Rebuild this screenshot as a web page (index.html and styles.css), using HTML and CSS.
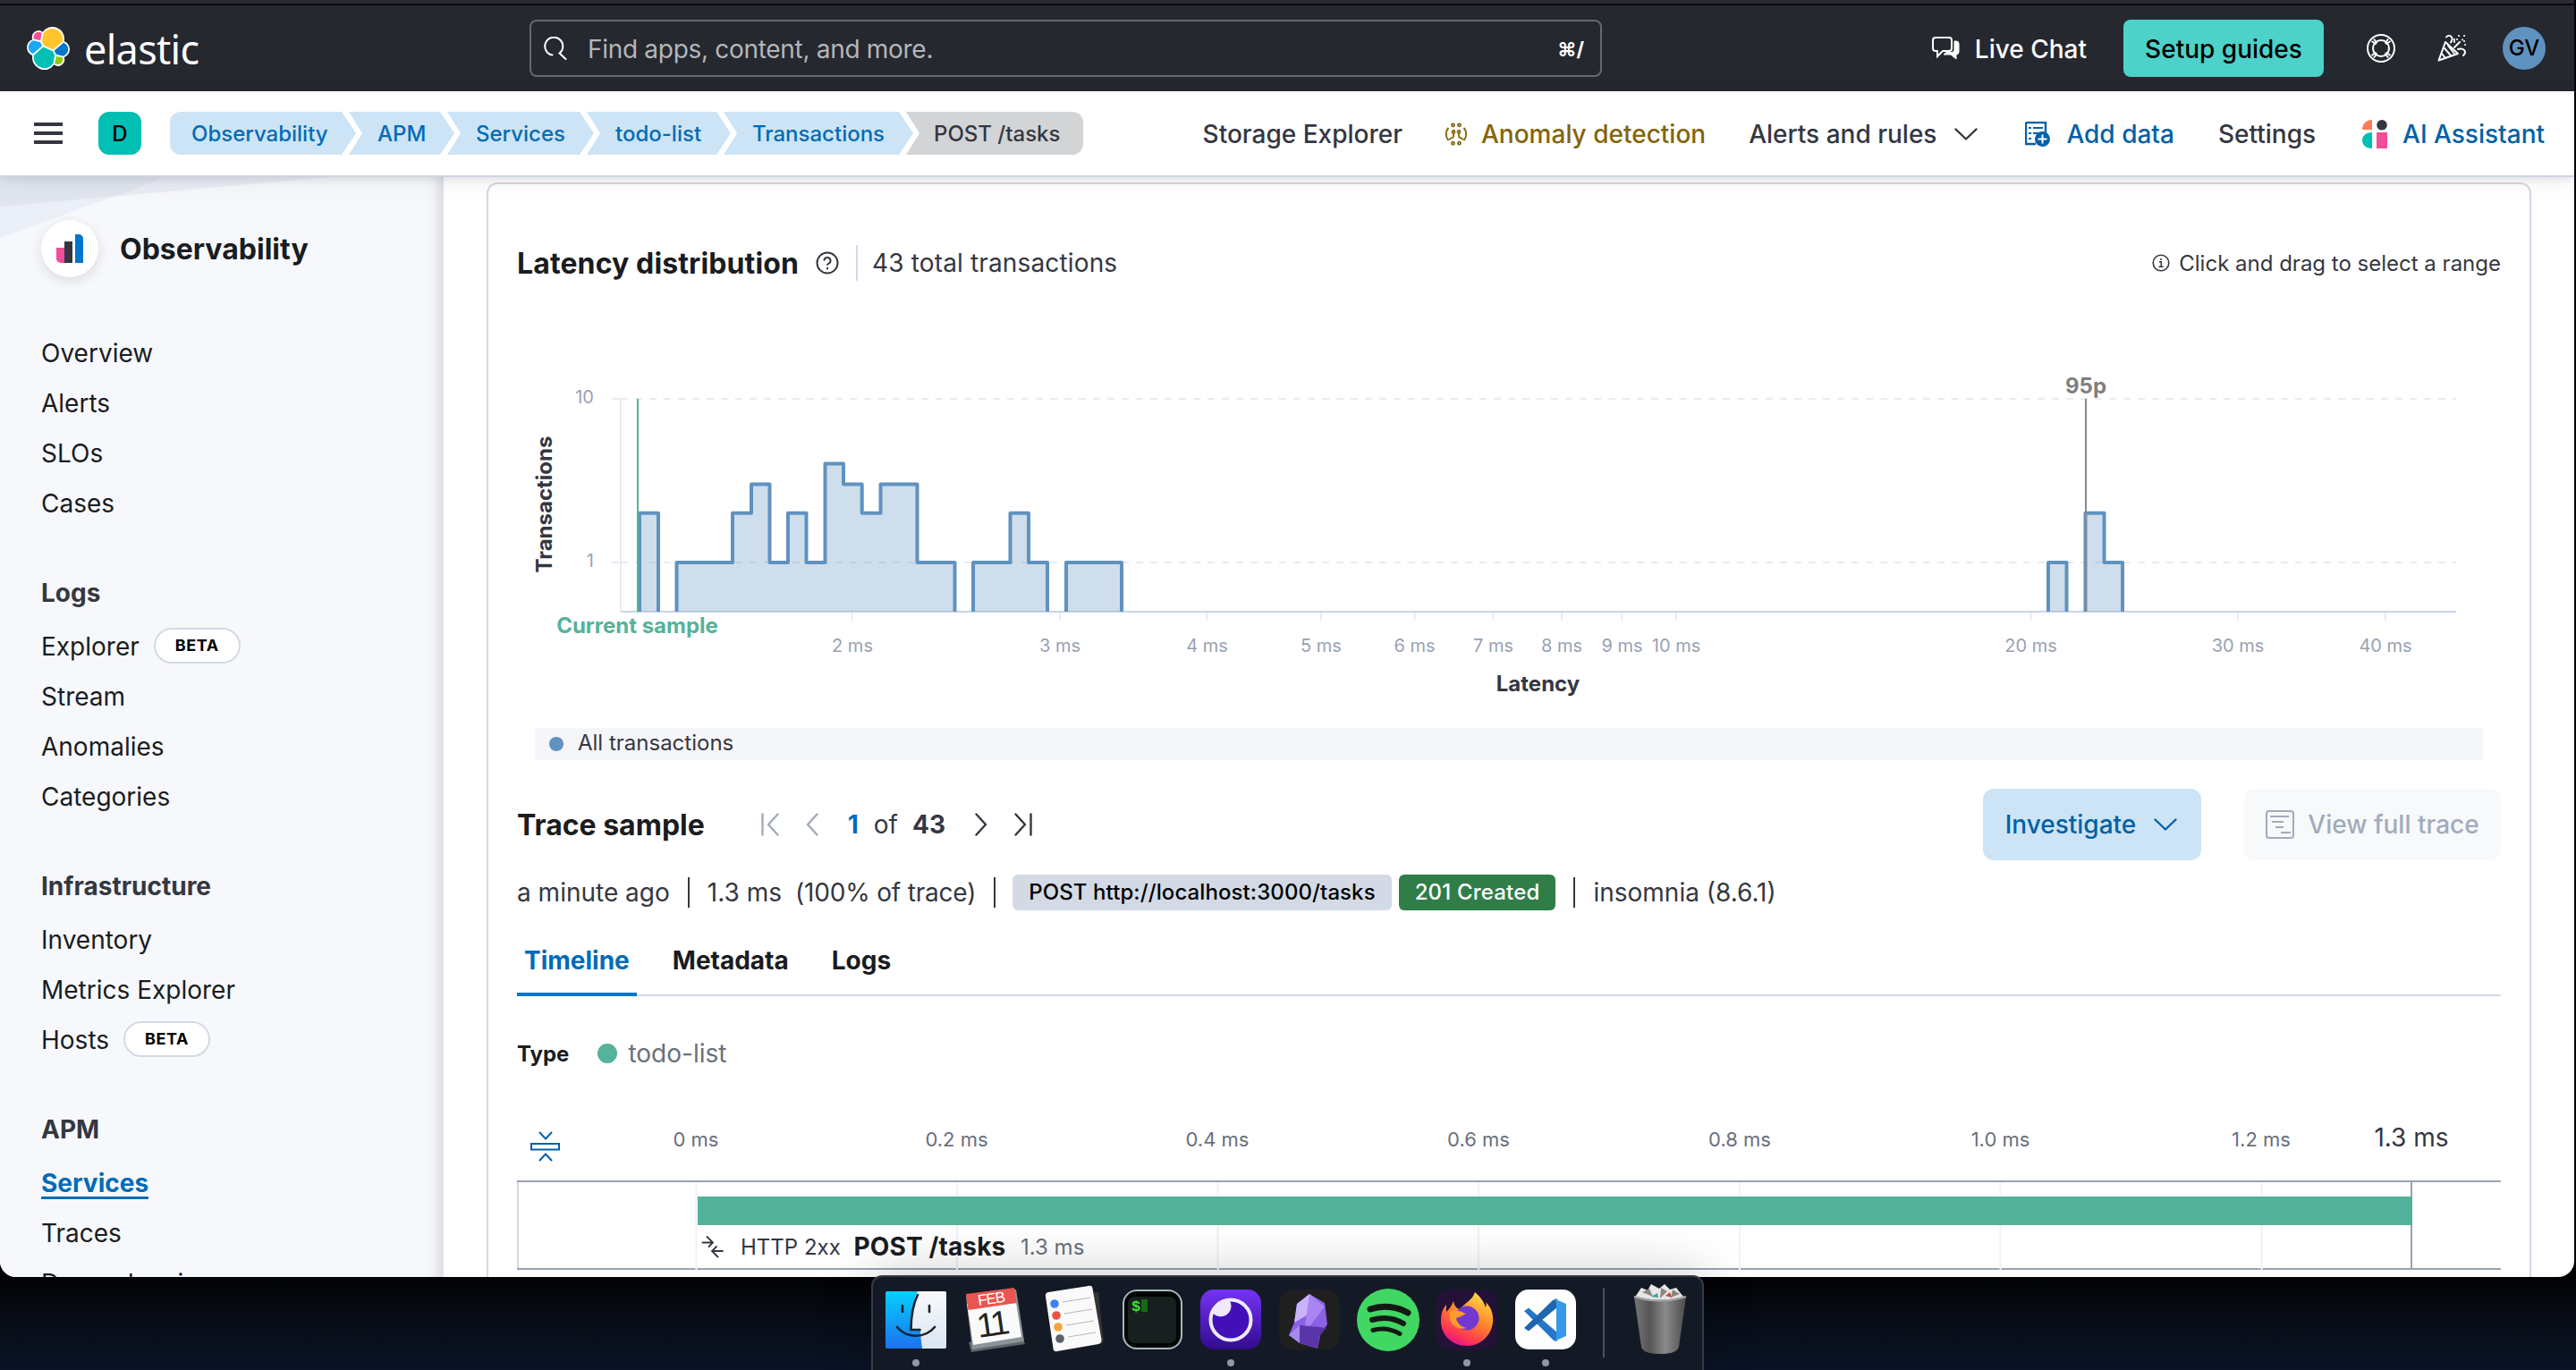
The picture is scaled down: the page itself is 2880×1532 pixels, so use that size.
FILE: index.html
```html
<!DOCTYPE html>
<html lang="en">
<head>
<meta charset="utf-8">
<title>POST /tasks - Transactions - APM - Elastic</title>
<link rel="stylesheet" href="styles.css">
</head>
<body>
<div class="window">
  <header class="topbar">
    <div class="brand">
      <svg class="brand-mark" viewBox="0 0 32 32"><path fill="#fff" d="M32 16.77a6.334 6.334 0 00-1.14-3.63 6.269 6.269 0 00-3.02-2.297 9.108 9.108 0 00-.873-5.965A9.05 9.05 0 0022.56.746a8.991 8.991 0 00-10.806 3.03 4.803 4.803 0 00-5.85-.065 4.857 4.857 0 00-1.704 5.63 6.357 6.357 0 00-3.035 2.32A6.406 6.406 0 000 15.31a6.344 6.344 0 001.145 3.646 6.279 6.279 0 003.039 2.301 9.137 9.137 0 00.87 5.968 9.081 9.081 0 004.422 4.134 9.02 9.02 0 006.016.428A9.053 9.053 0 0020.24 28.23a4.798 4.798 0 005.847.072 4.853 4.853 0 001.709-5.627 6.357 6.357 0 003.037-2.32A6.406 6.406 0 0032 16.77z"/><path fill="#fec52e" d="M12.58 13.787l7.002 3.211 7.066-6.213a7.849 7.849 0 00.152-1.557c0-1.692-.539-3.34-1.54-4.701a7.909 7.909 0 00-4.02-2.869 7.87 7.87 0 00-4.932.086 7.92 7.92 0 00-3.92 3.007l-1.178 6.104 1.37 2.932z"/><path fill="#00bfb3" d="M5.333 21.228A8.01 8.01 0 006.71 27.51a7.964 7.964 0 004.038 2.884 7.93 7.93 0 004.959-.082 7.97 7.97 0 003.943-3.014l1.166-6.106-1.556-2.985-7.03-3.211-6.897 6.232z"/><path fill="#f04e98" d="M5.288 9.067l4.8 1.137L11.14 4.73a3.785 3.785 0 00-4.538-.023A3.82 3.82 0 005.288 9.067z"/><path fill="#1ba9f5" d="M4.872 10.214a5.294 5.294 0 00-2.595 1.882 5.324 5.324 0 00-.142 6.124 5.287 5.287 0 002.505 2.002l6.733-6.101-1.235-2.65-5.266-1.257z"/><path fill="#93c90e" d="M20.873 27.298a3.742 3.742 0 002.285.785 3.783 3.783 0 003.101-1.63 3.813 3.813 0 00.451-3.484l-4.8-1.125-1.037 5.454z"/><path fill="#0077cc" d="M21.848 20.563l5.28 1.238a5.34 5.34 0 002.622-1.938 5.37 5.37 0 001.013-3.106 5.312 5.312 0 00-.936-3.01 5.283 5.283 0 00-2.475-1.944l-6.904 6.07 1.4 2.69z"/></svg>
      <span class="brand-name">elastic</span>
    </div>
    <div class="search">
      <svg class="search-icon" viewBox="0 0 26 26" fill="none" stroke="#fff" stroke-width="2" stroke-linecap="round"><path d="M9.5 20.6A10 10 0 1 1 17.5 18.6L24.5 25"/></svg>
      <span class="search-text">Find apps, content, and more.</span>
      <span class="search-key">⌘/</span>
    </div>
    <div class="top-actions">
      <span class="live-chat">
        <svg class="chat-icon" viewBox="0 0 32 28" fill="none" stroke="#fff" stroke-width="2"><path d="M4 2h15a3 3 0 0 1 3 3v9a3 3 0 0 1-3 3h-7l-6 6v-6H4a3 3 0 0 1-3-3V5a3 3 0 0 1 3-3z"/><path d="M25 6h2a3 3 0 0 1 3 3v9a3 3 0 0 1-3 3v5l-6-5h-8l3-2.500h6a3 3 0 0 0 3-3z" fill="#fff" stroke-width="1"/></svg>
        <span class="nudge">Live Chat</span></span>
      <span class="setup">Setup guides</span>
      <svg class="ring" viewBox="0 0 32 32" fill="none" stroke="#fff" stroke-width="2"><circle cx="16" cy="16" r="15"/><circle cx="16" cy="16" r="9"/><path d="M5.500 8l5 3.500M8 5.500l3.500 5M26.500 8l-5 3.500M24 5.500l-3.500 5M5.500 24l5-3.500M8 26.500l3.500-5M26.500 24l-5-3.500M24 26.500l-3.500-5"/></svg>
      <svg class="party" viewBox="0 0 34 32" fill="none" stroke="#fff" stroke-width="2" stroke-linecap="round" stroke-linejoin="round"><path d="M9 9L1.500 29.500 23 22z"/><path d="M8 16l7 8M5 22l4 5M12 13l7 9M10 3.500a3.500 3.500 0 0 1 6 4l-1 2M19 15l6-6M23 17c3-1 5-1 7 1s1 4-1 6M19 9V6"/><path d="M24 2h.1M22 6h.1M30 2h.1M28 6.500h.1M31 12h.1M30 8h.1"/></svg>
      <span class="user">GV</span>
    </div>
  </header>

  <nav class="subbar">
    <div class="burger"><i></i><i></i><i></i></div>
    <span class="space">D</span>
    <div class="crumbs">
      <span class="crumb crumb-first">Observability</span>
      <span class="crumb crumb-apm">APM</span>
      <span class="crumb crumb-services">Services</span>
      <span class="crumb crumb-list">todo-list</span>
      <span class="crumb crumb-tx">Transactions</span>
      <span class="crumb crumb-last">POST /tasks</span>
    </div>
    <div class="menu">
      <span class="menu-storage">Storage Explorer</span>
      <span class="menu-anomaly"><svg class="ml" viewBox="0 0 26 26" fill="none" stroke="#83650a" stroke-width="1.800"><path d="M4.500 6C1 9.500 1 16.500 4.500 20M21.500 6c3.500 3.500 3.500 10.500 0 14M10 12.500v3.500l-5 3M16 12.500v3.500l5 3"/><circle cx="9.500" cy="2.800" r="1.500"/><circle cx="16.500" cy="2.800" r="1.500"/><circle cx="9.500" cy="23.200" r="1.500"/><circle cx="16.500" cy="23.200" r="1.500"/><circle cx="10" cy="10.500" r="1.500"/><circle cx="16" cy="10.500" r="1.500"/></svg>Anomaly detection</span>
      <span class="menu-alerts">Alerts and rules<svg class="chev" viewBox="0 0 26 14" fill="none" stroke="#343741" stroke-width="2.400" stroke-linecap="round" stroke-linejoin="round"><path d="M1.500 1.500L13 12.500 24.500 1.500"/></svg></span>
      <span class="menu-add"><svg class="add" viewBox="0 0 28 28"><path d="M1 1h22v11M12 25H1V1" fill="none" stroke="#0061a6" stroke-width="2.400"/><path d="M4 7h3M9 7h11M4 13h3M9 13h7M4 19h3" stroke="#0061a6" stroke-width="2"/><circle cx="19.500" cy="19.500" r="8.500" fill="#0061a6"/><path d="M19.500 14.500v10M14.500 19.500h10" stroke="#fff" stroke-width="2"/></svg>Add data</span>
      <span class="menu-settings">Settings</span>
      <span class="menu-ai"><svg class="ai" viewBox="0 0 30 32"><path fill="#ff7a59" d="M12 0v11H1C1 5 5 0 12 0z"/><circle cx="23" cy="5.800" r="5.800" fill="#343741"/><path fill="#00bfb3" d="M12 14v18C5 32 1 28 1 23s4-9 11-9z"/><path fill="#f04e98" d="M17 14h12v18H17z"/></svg>AI Assistant</span>
    </div>
  </nav>

  <div class="body">
    <aside class="sidebar">
      <svg class="sidebar-deco" viewBox="0 0 496 80" preserveAspectRatio="none"><path d="M0 0h370L0 33z" fill="#e9ecf4"/><path d="M0 0h186L0 68z" fill="#e9edf7" fill-opacity=".9"/><path d="M0 0h186L133 21 0 33z" fill="#e1e5ee"/></svg>
      <div class="solution">
        <span class="solution-logo"><svg viewBox="0 0 30 32"><path fill="#f04e98" d="M0 15h9v17H5a5 5 0 0 1-5-5z"/><path fill="#343741" d="M9 8h9v24H9z"/><path fill="#0077cc" d="M21 0h4a5 5 0 0 1 5 5v27h-9z"/></svg></span>
        <h2>Observability</h2>
      </div>
      <ul class="group"><li>Overview</li><li>Alerts</li><li>SLOs</li><li>Cases</li></ul>
      <h3>Logs</h3>
      <ul class="group"><li>Explorer<span class="beta">BETA</span></li><li>Stream</li><li>Anomalies</li><li>Categories</li></ul>
      <h3>Infrastructure</h3>
      <ul class="group"><li>Inventory</li><li>Metrics Explorer</li><li>Hosts<span class="beta">BETA</span></li></ul>
      <h3>APM</h3>
      <ul class="group"><li class="active"><span>Services</span></li><li>Traces</li><li>Dependencies</li></ul>
    </aside>

    <main class="main">
      <section class="panel">
        <div class="latency-head">
          <h1 class="latency-title">Latency distribution</h1>
          <svg class="help" viewBox="0 0 26 26" fill="none" stroke="#343741" stroke-width="2"><circle cx="13" cy="13" r="11.500"/><path d="M9.500 10.500a3.500 3.500 0 1 1 5 3.100c-1 .5-1.500 1-1.500 2.200"/><path d="M13 18v2.200"/></svg>
          <span class="total">43 total transactions</span>
          <span class="hint"><svg class="info" viewBox="0 0 20 20" fill="none" stroke="#343741" stroke-width="1.600"><circle cx="10" cy="10" r="8.800"/><path d="M8 8.800h2.300V14M7.500 14.200h5.200M10 5v2"/></svg>Click and drag to select a range</span>
        </div>

        <svg class="chart" viewBox="578 314 2218 500">
          <g class="grid"><path d="M694 446H2746M694 629H2746" stroke-dasharray="8 8"/><path d="M684 446h12M684 629h12M694 446V684"/><path d="M952.800 684v10M1185 684v10M1349.500 684v10M1477 684v10M1581.500 684v10M1669.500 684v10M1746 684v10M1813.500 684v10M1874 684v10M2270.500 684v10M2502 684v10M2667 684v10"/><path d="M694 684H2746" class="baseline"/></g>
          <path class="area" d="M715 684V573.700H736V684zM756.500 684V629H819V573.700H840V541.600H860.500V629H881V573.700H901.500V629H922.500V518.600H943V541.600H963.700V573.700H984.500V541.600H1025.500V629H1067.500V684zM1088 684V629H1129.500V573.700H1150V629H1171V684zM1192 684V629H1254V684zM2290 684V629H2310.500V684zM2331.500 684V573.700H2352.500V629H2373V684z"/>
          <path class="outline" d="M715 684V573.700H736V684M756.500 684V629H819V573.700H840V541.600H860.500V629H881V573.700H901.500V629H922.500V518.600H943V541.600H963.700V573.700H984.500V541.600H1025.500V629H1067.500V684M1088 684V629H1129.500V573.700H1150V629H1171V684M1192 684V629H1254V684M2290 684V629H2310.500V684M2331.500 684V573.700H2352.500V629H2373V684"/>
          <path d="M713 446V684" stroke="#54b399" stroke-width="2"/>
          <path d="M2332 446V684" stroke="#888" stroke-width="2"/>
          <g class="tick"><text x="664" y="451" text-anchor="end">10</text><text x="664" y="634" text-anchor="end">1</text>
          <g text-anchor="middle"><text x="953" y="729">2 ms</text><text x="1185" y="729">3 ms</text><text x="1349.500" y="729">4 ms</text><text x="1477" y="729">5 ms</text><text x="1581.500" y="729">6 ms</text><text x="1669.500" y="729">7 ms</text><text x="1746" y="729">8 ms</text><text x="1813.500" y="729">9 ms</text><text x="1874" y="729">10 ms</text><text x="2270.500" y="729">20 ms</text><text x="2502" y="729">30 ms</text><text x="2667" y="729">40 ms</text></g></g>
          <text class="axis-title" x="1719.500" y="773">Latency</text>
          <text class="axis-title" transform="translate(617 564) rotate(-90)">Transactions</text>
          <text class="mark-sample" x="712.500" y="708">Current sample</text>
          <text class="mark-95" x="2332" y="440">95p</text>
        </svg>
        <div class="legend"><i></i><span>All transactions</span></div>

        <div class="trace-head">
          <h1>Trace sample</h1>
          <div class="pager">
            <svg class="pg-first" viewBox="0 0 20 26"><path d="M1.500 1.500v23M18.500 1.500L8 13l10.500 11.500"/></svg>
            <svg class="pg-prev" viewBox="0 0 14 26"><path d="M12.500 1.500L2 13l10.500 11.500"/></svg>
            <b class="pg-current">1</b><span class="pg-of">of</span><b class="pg-total">43</b>
            <svg class="pg-next" viewBox="0 0 14 26"><path d="M1.500 1.500L12 13 1.500 24.500"/></svg>
            <svg class="pg-last" viewBox="0 0 20 26"><path d="M1.500 1.500L12 13 1.500 24.500M18.500 1.500v23"/></svg>
          </div>
          <span class="investigate">Investigate<svg class="chev" viewBox="0 0 26 14" fill="none" stroke="#0061a6" stroke-width="2.400" stroke-linecap="round" stroke-linejoin="round"><path d="M1.500 1.500L13 12.500 24.500 1.500"/></svg></span>
          <span class="full-trace"><svg class="trace-icon" viewBox="0 0 32 32" fill="none" stroke="#a2abba" stroke-width="2"><rect x="1" y="1" width="30" height="30" rx="3"/><path d="M5 7h21M7 13h13M11 19h9M17 25h11"/></svg>View full trace</span>
        </div>

        <div class="facts">
          <span>a minute ago</span><i class="bar"></i><span>1.3 ms</span><span class="pct">(100% of trace)</span><i class="bar bar-tight"></i>
          <span class="badge">POST http://localhost:3000/tasks</span><span class="badge badge-ok">201 Created</span><i class="bar"></i><span>insomnia (8.6.1)</span>
        </div>

        <div class="tabs"><span class="tab tab-on">Timeline</span><span class="tab">Metadata</span><span class="tab">Logs</span></div>
        <div class="type"><b>Type</b><i></i><span>todo-list</span></div>

        <svg class="waterfall" viewBox="578 1198 2218 230">
          <g fill="none" stroke="#0061a6" stroke-width="2" stroke-linecap="round"><path d="M603.500 1266.500l6.500 7 6.500-7M603.500 1297.500l6.500-7 6.500 7"/><path d="M594 1279h31v6.500h-31z" stroke-linecap="butt"/></g>
          <g class="wf-tick"><text x="778" y="1282">0 ms</text><text x="1069.500" y="1282">0.2 ms</text><text x="1361" y="1282">0.4 ms</text><text x="1653" y="1282">0.6 ms</text><text x="1945" y="1282">0.8 ms</text><text x="2236.500" y="1282">1.0 ms</text><text x="2528" y="1282">1.2 ms</text></g>
          <text class="wf-end" x="2696" y="1282">1.3 ms</text>
          <path d="M578 1321H2796M578 1419H2796" stroke="#98a2b3" stroke-width="2"/>
          <path d="M579 1322V1418" stroke="#d3dae6" stroke-width="2"/>
          <path d="M778.500 1322V1420M1070 1322V1420M1361.500 1322V1420M1653 1322V1420M1945 1322V1420M2236.500 1322V1420M2528.500 1322V1420" stroke="#f0f2f7" stroke-width="2"/>
          <path d="M2696 1322V1418" stroke="#98a2b3" stroke-width="2"/>
          <path d="M780 1338H2697V1370H780z" fill="#52b39a"/>
          <g fill="none" stroke="#343741" stroke-width="1.800" stroke-linecap="round"><path d="M785.500 1389.500h11M790.500 1383l6.500 6.500-4.500 4.500M808 1399h-11M802.500 1405.500l-6.500-6.500 5-5"/></g>
          <text class="wf-http" x="828" y="1403">HTTP 2xx</text>
          <text class="wf-name" x="954.500" y="1404">POST /tasks</text>
          <text class="wf-dur" x="1141" y="1403">1.3 ms</text>
        </svg>
      </section>
    </main>
  </div>
</div>

<div class="dock">
  <svg class="app" viewBox="0 0 88 104">
    <defs><linearGradient id="fb" x2="0" y2="1"><stop stop-color="#06d0fb"/><stop offset="1" stop-color="#1b72f0"/></linearGradient><linearGradient id="fw" x2="0" y2="1"><stop stop-color="#f8f8fb"/><stop offset="1" stop-color="#dbe6f3"/></linearGradient></defs>
    <rect x="10" y="16" width="68" height="64" rx="2" fill="url(#fb)"/><path d="M46 16h30a2 2 0 0 1 2 2v60a2 2 0 0 1-2 2H51c-1-8-2-15-2-21H38c0-16 2-30 8-43z" fill="url(#fw)"/>
    <path d="M29 32v7M59 32v7M23 56c11 13 31 13 42 0M46 20c-6 12-7.500 24-7.500 39h10" fill="none" stroke="#1a2430" stroke-width="2.600" stroke-linecap="round"/><circle cx="44" cy="96" r="4" fill="#9097a6"/></svg>
  <svg class="app" viewBox="0 0 88 104"><path d="M15 73l57-12 6 14-60 9z" fill="#5e6669"/><path d="M12 22l56-8 9 58-58 9z" fill="#8b9599"/><path d="M13 30l54-8 7 45-54 9z" fill="#fafafa"/><path d="M12 19l54-7 2.500 17-54 8z" fill="#ea5550"/>
    <text class="cal-month" transform="translate(26 32) rotate(-8)">FEB</text><text class="cal-day" transform="translate(26 68) rotate(-8)">11</text></svg>
  <svg class="app" viewBox="0 0 88 104"><path d="M17 27l5 53q1 4 5 3l47-8q4-1 3.500-5L72 17z" fill="#343434"/><path d="M13 22q-1-4 3-5l45-7q4-1 4.500 3l10 57q.5 4-3.500 5l-46 8q-4 1-4.500-3z" fill="#fafafa"/>
    <g stroke="#b9b9b9" stroke-width="1.200"><path d="M32 28l31-5M34 41l31-5M36 54l31-5M38 67l31-5"/></g><circle cx="23" cy="30" r="4.800" fill="#3d84f7"/><circle cx="25" cy="43" r="4.800" fill="#ec5148"/><circle cx="27" cy="56" r="4.800" fill="#f3a33c"/><circle cx="29" cy="69" r="4.800" fill="#5d6168"/></svg>
  <svg class="app" viewBox="0 0 88 104"><rect x="11" y="14" width="67" height="67" rx="16" fill="#a9b8bd"/><rect x="13" y="16" width="63" height="63" rx="14" fill="#020303"/><rect x="17" y="22" width="54" height="52" rx="7" fill="#17201f"/><text class="term" x="21" y="38">$</text><rect x="32" y="25" width="7" height="14" fill="#186a17"/></svg>
  <svg class="app" viewBox="0 0 88 104"><defs><linearGradient id="in" x2="0" y2="1"><stop stop-color="#7533f5"/><stop offset="1" stop-color="#320b8e"/></linearGradient></defs><rect x="10" y="14" width="68" height="67" rx="15" fill="url(#in)"/><circle cx="44" cy="48" r="22.500" fill="#4310b8" stroke="#eeeafb" stroke-width="4"/><path d="M42.500 26A23 23 0 0 0 23 39a10 10 0 1 0 19.500-13z" fill="#eeeafb"/><circle cx="44" cy="96" r="4" fill="#9097a6"/></svg>
  <svg class="app" viewBox="0 0 88 104"><rect x="10" y="14" width="68" height="67" rx="15" fill="#1f1f1f"/><path d="M44 19l-14 11-3 21-6 14 12 9 20 6 3-15 8-12-3-24z" fill="#8c61e6"/><path d="M44 19l-14 11-3 21 17-10z" fill="#c9b3fb"/><path d="M44 19l-5 36 6-1 16-21z" fill="#a885f2"/><path d="M33 54l22 2 8 1-8 9-2 14-20-6z" fill="#5a35a8"/><path d="M33 54l-12 11 12 9z" fill="#a788ee"/></svg>
  <svg class="app" viewBox="0 0 88 104"><circle cx="44" cy="48" r="35" fill="#41d763"/><g fill="none" stroke="#121a14" stroke-linecap="round"><path d="M24 36c14-5 30-3 42 4" stroke-width="7"/><path d="M26 48c12-3.500 25-2 35 4" stroke-width="6"/><path d="M27 59.500c11-3 21-1 30 4" stroke-width="5"/></g></svg>
  <svg class="app" viewBox="0 0 88 104"><defs><linearGradient id="ff" x1=".8" x2=".3" y2="1"><stop stop-color="#ffe04a"/><stop offset=".45" stop-color="#ff8a2a"/><stop offset=".8" stop-color="#ff3a4e"/><stop offset="1" stop-color="#e4108c"/></linearGradient></defs><rect x="10" y="14" width="68" height="67" rx="15" fill="#241137"/><path d="M53 17c7 6 10 11 12 17 1-3 1-4 0-6 6 6 9 13 8 23-2 15-14 26-29 26-17 0-29-12-29-28 0-8 2-14 6-18v8c4-4 6-7 8-12 1 5 3 8 7 9 7-8 14-10 17-19z" fill="url(#ff)"/><circle cx="44" cy="46" r="13.500" fill="#7139d0"/><path d="M25 39c7-4 12 0 18 2-4 2-7 4-11 5 1 6 6 10 12 11-12 3-21-5-19-18z" fill="#ff9a2c"/><circle cx="44" cy="96" r="4" fill="#9097a6"/></svg>
  <svg class="app" viewBox="0 0 88 104"><rect x="10" y="14" width="68" height="67" rx="15" fill="#fff"/><path d="M20 38l5-3.500L57 62v10l-4-1z" fill="#2577c6"/><path d="M20 57l5 3.500L57 34V24l-5 2z" fill="#1f66ad"/><path d="M53 24l14 6v36l-14 6q3-2 3-5V29q0-3-3-5z" fill="#3698ea"/><circle cx="44" cy="96" r="4" fill="#9097a6"/></svg>
  <i class="dock-rule"></i>
  <svg class="app" viewBox="0 0 88 104"><defs><linearGradient id="tr"><stop stop-color="#777"/><stop offset=".3" stop-color="#555"/><stop offset=".6" stop-color="#8a8a8a"/><stop offset="1" stop-color="#4b4b4b"/></linearGradient></defs><path d="M15 22q29-12 58 0l-8 56q-2 8-21 8t-21-8z" fill="url(#tr)"/><path d="M17 21l6-9 7 3 4-7 9 5 6-5 6 6 7-2 8 10q-26 7-53 0z" fill="#e6e6e6"/><path d="M24 17l8-4 4 9zM45 12l7 4-8 8zM58 14l8 5-10 4z" fill="#8f8580"/><path d="M34 22l7-4 1 5z" fill="#37a2a0"/><path d="M50 21l5-4 2 6z" fill="#c24b3b"/><path d="M15 22q29 9 58 0" fill="none" stroke="#a5a5a5" stroke-width="2"/></svg>
</div>
</body>
</html>
```
FILE: styles.css
```css
* { box-sizing: border-box; }
body {
  margin: 0; width: 2880px; height: 1532px; overflow: hidden; position: relative;
  background: linear-gradient(#020305 0, #020305 1430px, #070b14 1470px, #0a1426 1532px);
  font-family: Inter, "Liberation Sans", sans-serif; font-size: 28px; color: #343741;
}
h1, h2, h3, ul { margin: 0; padding: 0; list-style: none; }
svg { display: block; flex: none; }
span, b, li { white-space: nowrap; }
.window {
  width: 2878px; height: 1428px; overflow: hidden; background: #fff;
  border-top: 4px solid #2b2a33; border-radius: 0 0 18px 18px;
  display: flex; flex-direction: column;
}

/* Global header */
.topbar { height: 98px; flex: none; border-top: 2px solid #08080a; background: #25282f; display: flex; align-items: center; padding: 0 32px 0 30px; color: #fff; }
.brand { width: 562px; display: flex; align-items: center; }
.brand-mark { width: 48px; height: 48px; }
.brand-name { font: 400 45px/60px "Noto Sans", sans-serif; letter-spacing: -.7px; margin-left: 16px; padding-top: 1px; }
.search { width: 1199px; height: 64px; border: 2px solid #65686e; border-radius: 8px; display: flex; align-items: center; padding: 0 18px 0 14px; }
.search-icon { width: 26px; height: 26px; }
.search-text { margin-left: 23px; padding-top: 2px; letter-spacing: -.3px; color: #b4b6ba; flex: 1; }
.search-key { font-size: 22px; font-weight: 700; padding-top: 2px; }
.top-actions { flex: 1; display: flex; align-items: center; justify-content: flex-end; font-weight: 500; }
.live-chat { display: flex; align-items: center; }
.nudge { padding-top: 2px; }
.chat-icon { width: 32px; height: 28px; margin-right: 16px; }
.setup { margin-left: 41px; width: 224px; height: 64px; padding-top: 1px; border-radius: 8px; background: #4dd2ca; color: #000; line-height: 64px; text-align: center; }
.ring { width: 32px; height: 32px; margin-left: 48px; }
.party { width: 34px; height: 32px; margin-left: 47px; }
.user { width: 48px; height: 48px; margin-left: 39px; border-radius: 50%; background: #6092c0; color: #000; font-size: 24px; line-height: 48px; text-align: center; }

/* Breadcrumb bar */
.subbar { height: 96px; flex: none; border-bottom: 2px solid #cdd4e2; display: flex; align-items: center; padding: 0 33px 0 38px; position: relative; z-index: 2; background: #fff; box-shadow: 0 2px 10px rgba(0,0,0,.1), 0 6px 30px rgba(0,0,0,.05); }
.burger { width: 32px; display: flex; flex-direction: column; gap: 6px; }
.burger i { height: 4px; background: #343741; }
.space { width: 48px; height: 48px; margin-left: 40px; border-radius: 12px; background: #00bfb3; color: #000; font-size: 24px; font-weight: 500; line-height: 49px; text-align: center; }
.crumbs { margin-left: 32px; display: flex; font-size: 24px; font-weight: 500; }
.crumb { height: 48px; line-height: 50px; padding-left: 32px; margin-left: -8px; background: #cce4f5; color: #006bb8; clip-path: polygon(0 0, calc(100% - 16px) 0, 100% 50%, calc(100% - 16px) 100%, 0 100%, 15px 50%); }
.crumb-first { width: 208px; padding-left: 24px; margin-left: 0; border-radius: 12px 0 0 12px; clip-path: polygon(0 0, calc(100% - 16px) 0, 100% 50%, calc(100% - 16px) 100%, 0 100%); }
.crumb-apm { width: 118px; }
.crumb-services { width: 164px; }
.crumb-list { width: 161px; }
.crumb-tx { width: 212px; }
.crumb-last { width: 198px; padding-left: 31px; border-radius: 0 12px 12px 0; background: #d3d4d6; color: #343741; clip-path: polygon(0 0, 100% 0, 100% 100%, 0 100%, 15px 50%); }
.menu { margin-left: auto; display: flex; align-items: center; padding-top: 2px; font-weight: 500; }
.menu span { display: flex; align-items: center; }
.menu-anomaly { margin-left: 47px; color: #83650a; }
.ml { width: 26px; height: 26px; margin-right: 15px; }
.menu-alerts { margin-left: 48px; }
.chev { width: 26px; height: 14px; margin-left: 20px; }
.menu-add { margin-left: 53px; color: #0061a6; }
.add { width: 28px; height: 28px; margin-right: 18px; }
.menu-settings { margin-left: 49px; }
.menu-ai { margin-left: 51px; color: #0061a6; }
.ai { width: 30px; height: 32px; margin-right: 16px; }

/* Sidebar */
.body { flex: 1; min-height: 0; display: flex; }
.sidebar { width: 496px; flex: none; position: relative; padding: 48px 0 0 46px; background: #f7f8fc; border-right: 2px solid #dfe2ec; box-shadow: inset -14px 0 14px -10px rgba(60,65,80,.16); color: #1a1c21; }
.sidebar-deco { position: absolute; left: 0; top: 0; width: 494px; height: 80px; }
.solution { position: relative; display: flex; align-items: center; height: 64px; margin-bottom: 57px; }
.solution h2 { margin-left: 24px; font-size: 32px; font-weight: 700; }
.solution-logo { width: 64px; height: 64px; border-radius: 50%; background: #fff; box-shadow: 0 4px 14px rgba(0,0,0,.12); padding: 16px 17px; }
.solution-logo svg { width: 30px; height: 32px; }
.group { margin-bottom: 44px; }
.group li { height: 56px; display: flex; align-items: center; }
.sidebar h3 { height: 56px; margin-bottom: 4px; line-height: 56px; font-size: 28px; font-weight: 700; color: #343741; }
.beta { margin-left: 16px; margin-top: -2px; width: 97px; height: 40px; border: 2px solid #d3dae6; border-radius: 20px; background: #fff; color: #000; font-size: 18px; font-weight: 700; letter-spacing: .6px; line-height: 36px; text-align: center; }
.active { color: #006bb8; font-weight: 700; }
.active span { border-bottom: 3px solid #006bb8; line-height: 30px; margin-top: 3px; }

/* Main panel */
.main { flex: 1; padding: 6px 48px 0; }
.panel { height: 1400px; border: 2px solid #d3dae6; border-radius: 12px; padding: 68px 32px 0; }
h1 { font-size: 32px; font-weight: 700; color: #1a1c21; }
.latency-title { letter-spacing: .12px; }
.latency-head { height: 40px; display: flex; align-items: center; }
.help { width: 26px; height: 26px; margin: 0 19px; }
.total { height: 40px; line-height: 40px; padding-left: 16px; border-left: 2px solid #d3dae6; letter-spacing: .15px; }
.hint { margin-left: auto; display: flex; align-items: center; font-size: 24px; }
.info { width: 20px; height: 20px; margin-right: 10px; }
.chart { width: 2218px; height: 500px; }
.chart text, .waterfall text { font-family: Inter, "Liberation Sans", sans-serif; }
.grid path { fill: none; stroke: #e9ebf3; stroke-width: 2; }
.grid .baseline { stroke: #c8d6e6; }
.area { fill: #6092c0; fill-opacity: .3; }
.outline { fill: none; stroke: #6092c0; stroke-width: 4; stroke-linejoin: round; }
.tick text { font-size: 20px; fill: #98a2b3; }
.axis-title { font-size: 24px; font-weight: 700; fill: #343741; text-anchor: middle; }
.mark-sample { font-size: 24px; font-weight: 700; fill: #54b399; text-anchor: middle; }
.mark-95 { font-size: 24px; font-weight: 700; fill: #7f7f7f; text-anchor: middle; }
.legend { height: 36px; margin: 0 20px; padding-left: 16px; background: #f5f6fa; display: flex; align-items: center; font-size: 24px; }
.legend i { width: 16px; height: 16px; margin-right: 16px; border-radius: 50%; background: #6092c0; }
.legend span { padding-bottom: 3px; }
.trace-head { height: 80px; margin-top: 32px; display: flex; align-items: center; }
.pager { flex: 1; margin-left: 63px; display: flex; align-items: center; fill: none; stroke-width: 2.4; stroke-linecap: round; stroke-linejoin: round; stroke: #343741; }
.pg-first, .pg-last { width: 20px; height: 26px; }
.pg-prev, .pg-next { width: 14px; height: 26px; }
.pg-first, .pg-prev { stroke: #a2abba; }
.pg-prev { margin-left: 30px; }
.pg-current { margin-left: 33px; width: 14px; color: #006bb8; }
.pg-of { margin-left: 15px; }
.pg-total { margin-left: 16px; }
.pg-next { margin-left: 33px; }
.pg-last { margin-left: 30px; }
.investigate, .full-trace { height: 80px; border-radius: 12px; display: flex; align-items: center; justify-content: center; font-weight: 500; }
.investigate { width: 244px; padding-right: 2px; background: #cce4f5; color: #0061a6; }
.full-trace { width: 287px; margin-left: 48px; background: #f7f9fb; color: #a2abba; }
.trace-icon { width: 32px; height: 32px; margin-right: 15px; }
.facts { height: 40px; margin-top: 16px; display: flex; align-items: center; }
.bar { width: 2px; height: 34px; margin: 0 20px; background: #343741; }
.bar-tight { margin-right: 19px; }
.pct { margin-left: 15px; letter-spacing: -.18px; }
.badge { height: 40px; line-height: 40px; padding: 0 18px; border-radius: 6px; background: #d3dae6; color: #000; font-size: 24px; font-weight: 500; letter-spacing: .09px; }
.badge-ok { margin-left: 8px; background: #307d48; color: #fff; letter-spacing: .17px; }
.tabs { height: 80px; margin-top: 16px; display: flex; gap: 32px; border-bottom: 2px solid #d3dae6; }
.tab { height: 80px; line-height: 80px; padding: 0 8px; font-weight: 700; color: #1a1c21; }
.tab-on { color: #006bb8; border-bottom: 4px solid #0077cc; }
.type { height: 40px; margin-top: 44px; display: flex; align-items: center; }
.type b { font-size: 24px; color: #1a1c21; }
.type i { width: 22px; height: 22px; margin: 0 12px 0 32px; border-radius: 50%; background: #54b399; }
.type span { color: #69707d; }
.waterfall { width: 2218px; height: 230px; }
.wf-tick text { font-size: 22px; fill: #69707d; text-anchor: middle; }
.wf-end { font-size: 28px; fill: #343741; text-anchor: middle; }
.wf-http { font-size: 24px; fill: #343741; }
.wf-name { font-size: 28px; font-weight: 700; letter-spacing: .12px; fill: #1a1c21; }
.wf-dur { font-size: 24px; fill: #69707d; }

/* Dock floats over the window and the desktop */
.dock { position: absolute; left: 974px; top: 1426px; width: 931px; height: 120px; border: 2px solid #353b46; border-radius: 12px; background: #131a26; box-shadow: 0 0 60px rgba(0,0,0,.22); display: flex; padding-left: 4px; }
.app { width: 88px; height: 104px; }
.dock-rule { width: 2px; height: 78px; margin: 12px 18px 0 20px; background: #4a515c; }
.cal-month { font: 400 17px "Liberation Sans", sans-serif; letter-spacing: -1px; fill: #fff; }
.cal-day { font: 400 38px "Liberation Sans", sans-serif; letter-spacing: -3px; fill: #222; }
.term { font: 700 17px "Liberation Mono", monospace; fill: #3ee03b; }
```
